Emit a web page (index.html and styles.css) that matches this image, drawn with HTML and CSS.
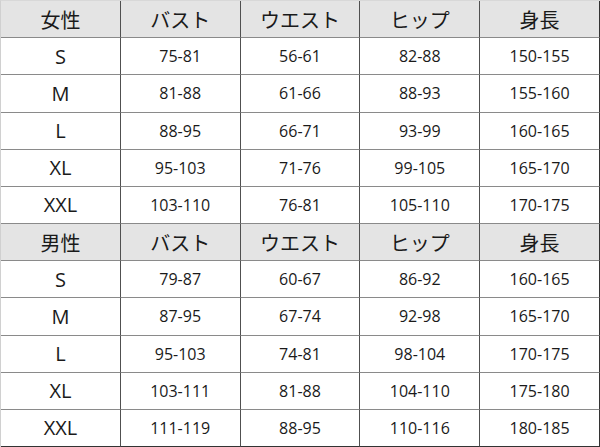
FILE: index.html
```html
<!DOCTYPE html>
<html lang="ja">
<head>
<meta charset="utf-8">
<link rel="stylesheet" href="styles.css">
</head>
<body>
<div class="chart">
  <div class="cell head">女性</div><div class="cell head">バスト</div><div class="cell head">ウエスト</div><div class="cell head">ヒップ</div><div class="cell head">身長</div>
  <div class="cell size">S</div><div class="cell">75-81</div><div class="cell">56-61</div><div class="cell">82-88</div><div class="cell">150-155</div>
  <div class="cell size">M</div><div class="cell">81-88</div><div class="cell">61-66</div><div class="cell">88-93</div><div class="cell">155-160</div>
  <div class="cell size">L</div><div class="cell">88-95</div><div class="cell">66-71</div><div class="cell">93-99</div><div class="cell">160-165</div>
  <div class="cell size">XL</div><div class="cell">95-103</div><div class="cell">71-76</div><div class="cell">99-105</div><div class="cell">165-170</div>
  <div class="cell size">XXL</div><div class="cell">103-110</div><div class="cell">76-81</div><div class="cell">105-110</div><div class="cell">170-175</div>
  <div class="cell head">男性</div><div class="cell head">バスト</div><div class="cell head">ウエスト</div><div class="cell head">ヒップ</div><div class="cell head">身長</div>
  <div class="cell size">S</div><div class="cell">79-87</div><div class="cell">60-67</div><div class="cell">86-92</div><div class="cell">160-165</div>
  <div class="cell size">M</div><div class="cell">87-95</div><div class="cell">67-74</div><div class="cell">92-98</div><div class="cell">165-170</div>
  <div class="cell size">L</div><div class="cell">95-103</div><div class="cell">74-81</div><div class="cell">98-104</div><div class="cell">170-175</div>
  <div class="cell size">XL</div><div class="cell">103-111</div><div class="cell">81-88</div><div class="cell">104-110</div><div class="cell">175-180</div>
  <div class="cell size">XXL</div><div class="cell">111-119</div><div class="cell">88-95</div><div class="cell">110-116</div><div class="cell">180-185</div>
</div>
</body>
</html>
```
FILE: styles.css
```css
html, body {
  margin: 0;
  padding: 0;
  background: #ffffff;
}
.chart {
  width: 600px;
  height: 447px;
  box-sizing: border-box;
  display: grid;
  grid-template-columns: repeat(5, 1fr);
  grid-template-rows: repeat(12, 1fr);
  border-left: 1px solid #d0d0d0;
  border-top: 1px solid #d8d8d8;
  font-family: "Open Sans", "Noto Sans CJK JP", sans-serif;
  color: #1a1a1a;
}
.cell {
  display: flex;
  align-items: center;
  justify-content: center;
  border-right: 1px solid #505050;
  border-bottom: 1px solid #8a8a8a;
  font-size: 16px;
  background: #ffffff;
}
.cell:nth-child(5n) {
  border-right-color: #333333;
}
.cell:nth-last-child(-n+5) {
  border-bottom-color: #333333;
}
.head {
  background: #e4e4e4;
  font-size: 20px;
}
.size {
  font-size: 20px;
}
```
